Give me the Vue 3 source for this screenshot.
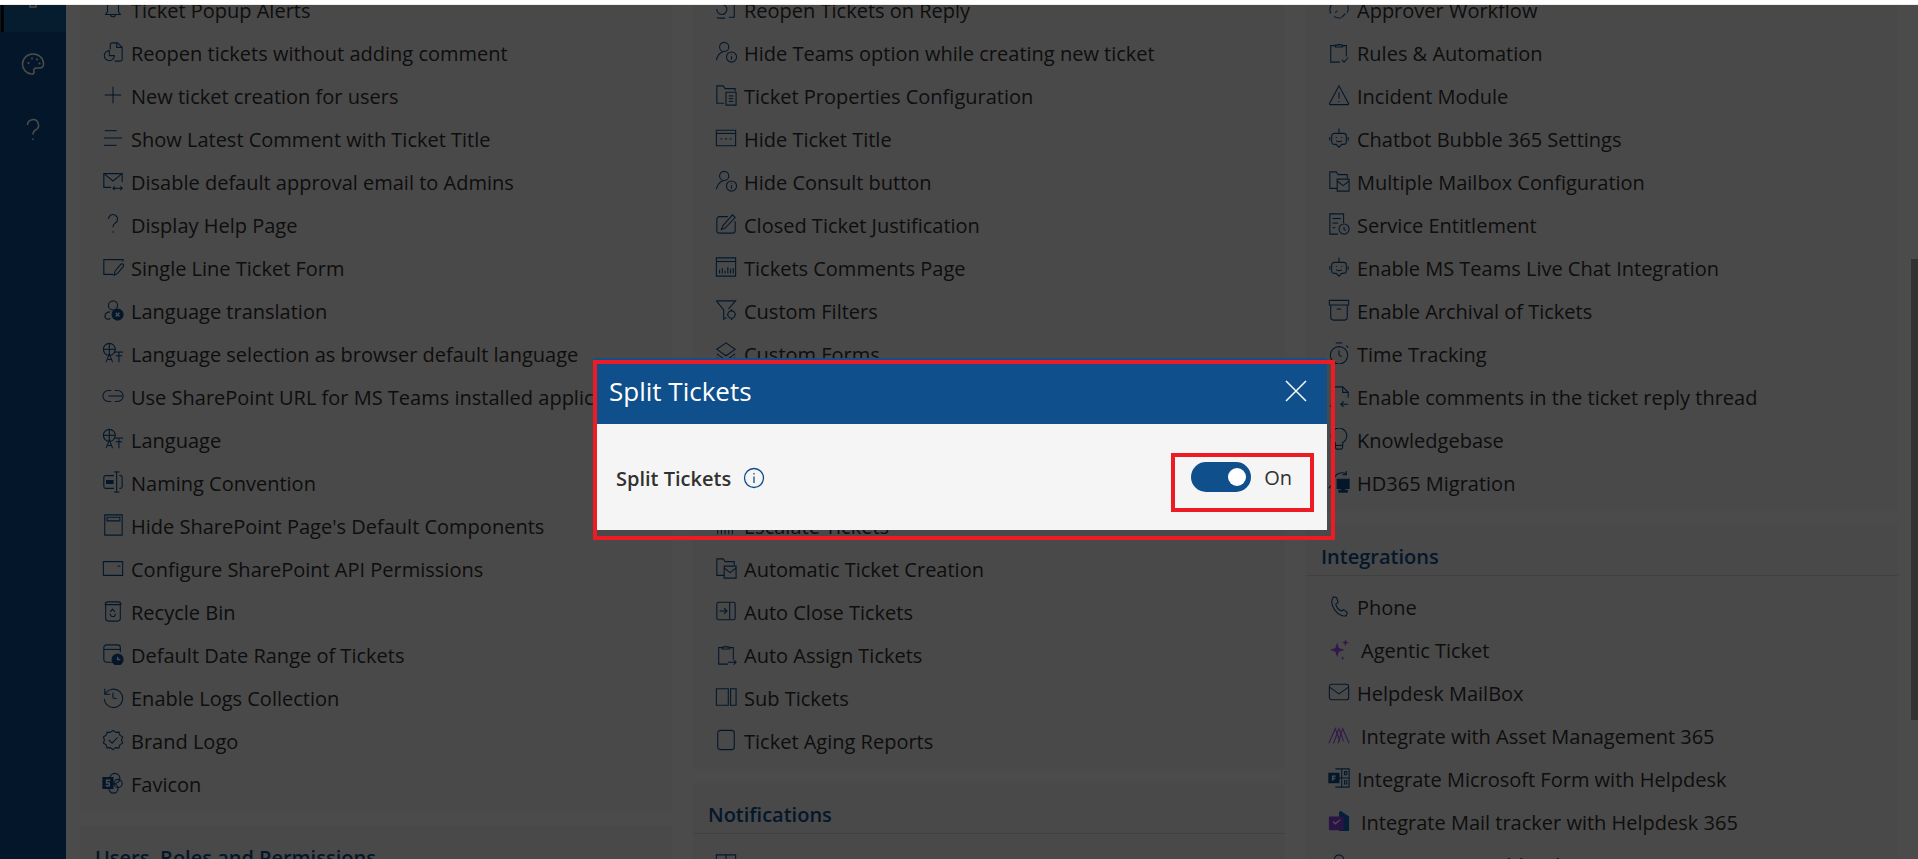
<script setup>
// stroke icons, 24x24 box. entries with f are filled, w is a white mark on a filled badge
const icons = {
  bell: ['M12 2a6 6 0 0 0-6 6v7l-2 3h16l-2-3V8a6 6 0 0 0-6-6z', 'M9.5 18a2.5 2.5 0 0 0 5 0'],
  reopen: ['M9 9V4a2 2 0 0 1 2-2h6l5 5v13a2 2 0 0 1-2 2h-6', 'M16 2v5h6', 'M8 10.500a5.500 5.500 0 1 0 5.500 5.500H8z'],
  plus: ['M12 3v18', 'M3 12h18'],
  lines: ['M3 4h13', 'M2 12h20', 'M2 20h14'],
  mailSwap: ['M10 19H2V4h20v9', 'M2 4l10 8 10-8', 'M12 20h10', 'M14 18l-2 2 2 2', 'M20 18l2 2-2 2'],
  question: ['M7 6.500a5 5 0 1 1 7.500 4.500c-1.700 1-2.500 2.200-2.500 4.500', 'M12 20v1.500'],
  formEdit: ['M12 20H2V4h21v2', 'M13 21l1.500-5L21 8.500a2 2 0 0 1 2.500 2.500L17 19z'],
  userX: ['M12 2a5 5 0 1 0 0 10a5 5 0 0 0 0-10z', 'M9 14a6 6 0 0 0-6 5a3.500 3.500 0 0 0 6 2', { f: 1, d: 'M17 11a6 6 0 1 0 0 12a6 6 0 0 0 0-12z' }, { w: 1, d: 'M15 15l4 4M19 15l-4 4' }],
  lang: ['M8 1.500a6.500 6.500 0 1 0 0 13a6.500 6.500 0 0 0 0-13z', 'M1.500 8h13', 'M8 1.500v13', 'M4.500 22l3.500-9 3.500 9', 'M6 19h4', 'M14 11h9', 'M18.500 11v11', 'M15 15h7'],
  link: ['M10 6H7a6 6 0 0 0 0 12h3', 'M14 6h3a6 6 0 0 1 0 12h-3', 'M7 12h15'],
  naming: ['M13 5H4a2 2 0 0 0-2 2v10a2 2 0 0 0 2 2h9', 'M19 5h1a2 2 0 0 1 2 2v10a2 2 0 0 1-2 2h-1', 'M16 1v22', 'M13 1h6', 'M13 23h6', { f: 1, d: 'M5 10.500h7v3H5z' }],
  page: ['M3 1h19v22H3z', 'M5.500 3.500h14v4h-14z'],
  wallet: ['M1.500 5h21v15h-21z', 'M17 10h3'],
  recycle: ['M4 5v15a3 3 0 0 0 3 3h10a3 3 0 0 0 3-3V5', 'M3.500 5a3 3 0 0 1 3-3h11a3 3 0 0 1 3 3z', 'M9 13l2.500-3 2.500 3', 'M8.500 15l2 3h3l1.500-3'],
  calClock: ['M12 21H5a3 3 0 0 1-3-3V5a3 3 0 0 1 3-3h12a3 3 0 0 1 3 3v5', 'M2 7h18', { f: 1, d: 'M17 12a6 6 0 1 0 0 12a6 6 0 0 0 0-12z' }, { w: 1, d: 'M17 15v3h3' }],
  history: ['M3 3v6h6', 'M3.500 9a10 10 0 1 1-1 5', 'M12 7v6l4 1'],
  badge: ['M12 1.500l3 2.200 3.500-.3 1 3.300 3 2-1.200 3.300 1.200 3.300-3 2-1 3.300-3.500-.3-3 2.200-3-2.200-3.500.3-1-3.300-3-2 1.200-3.300L1.500 8.700l3-2 1-3.300 3.500.3z', 'M7.500 12l3.500 3.500 6-6.500'],
  sharepoint: ['M14 1.500a5.500 5.500 0 1 0 0 11a5.500 5.500 0 0 0 0-11z', 'M17.500 8a4.500 4.500 0 1 0 0 9a4.500 4.500 0 0 0 0-9z', 'M12.500 13a5 5 0 1 0 0 10a5 5 0 0 0 0-10z', { f: 1, d: 'M1 6h11v12H1z' }, { w: 1, d: 'M9 9H5v3h3v3H4' }],
  reply: ['M11 22H4a3 3 0 0 1-2-1', 'M2 12a5.500 5.500 0 1 0 5-5', 'M15 3h6v18h-6'],
  userInfo: ['M10 1.500a5 5 0 1 0 0 10a5 5 0 0 0 0-10z', 'M1.500 21c1-5 3.500-8 7-9', 'M18 12a5.500 5.500 0 1 0 0 11a5.500 5.500 0 0 0 0-11z', 'M18 16.500v4', 'M18 14.500v.5'],
  folderDoc: ['M10 21H2V2h7l2 3h11v3', 'M12 9h11v14H12z', 'M15 13h5', 'M15 16h5', 'M15 19h5'],
  dots: ['M1.500 3.500h21v17h-21z', 'M1.500 7h21', 'M6 13h2', 'M11 13h2', 'M16 13h2'],
  editBox: ['M14 4H5a3 3 0 0 0-3 3v12a3 3 0 0 0 3 3h14a3 3 0 0 0 3-3V9', 'M7 18l1.500-4L19 2l3 3L11 16.500z'],
  chartBox: ['M1.500 2h21v20h-21z', 'M1.500 6h21', 'M5 19v-4', 'M8 19v-6', 'M11 19v-3', 'M14 19v-7', 'M17 19v-5', 'M20 19v-6'],
  filterGear: ['M1.500 2h21l-8 9', 'M1.500 2l8 10v10l3-2', 'M18 13a4 4 0 1 0 0 8a4 4 0 0 0 0-8z', 'M18 11v2', 'M18 21v2', 'M13 17h1', 'M22 17h1'],
  layers: ['M12 1l10 7-10 7-10-7z', 'M2 13l10 7 10-7', 'M2 17l10 7 10-7'],
  bars: ['M3 2v20', 'M7 2v20', 'M11 2v20', 'M15 2v20', 'M19 2v20'],
  folderMail: ['M10 20H2V2h7l2 3h10v4', 'M10 10h13v13H10z', 'M10 12l6.500 5 6.500-5'],
  panelArrow: ['M4 2.500h16a2 2 0 0 1 2 2v15a2 2 0 0 1-2 2H4a2 2 0 0 1-2-2v-15a2 2 0 0 1 2-2z', 'M16 2.500v19', 'M5 12h8', 'M10 9l3 3-3 3'],
  clipArrow: ['M8 5H4v18h10', 'M16 5h4v13', 'M8 6.500V4.500h2.500a1.800 1.800 0 0 1 3 0H16v2z', 'M14 21h9', 'M20.500 18.500L23 21l-2.500 2.500'],
  panels: ['M1.500 3h13v18h-13z', 'M17 3h6v18h-6z'],
  roundBox: ['M6 1.500h12a3 3 0 0 1 3 3v15a3 3 0 0 1-3 3H6a3 3 0 0 1-3-3v-15a3 3 0 0 1 3-3z'],
  status: ['M1.500 2h21v21h-21z', 'M12 2v10'],
  dashed: ['M4 7a10 10 0 0 0-1 10', 'M6.500 20a10 10 0 0 0 8 1.500', 'M21 16a10 10 0 0 0 .5-8', 'M8 16l2-2', 'M15 21l4-4'],
  clipCheck: ['M8 5H3v18h10', 'M16 5h4v12', 'M8 6.500V4.500h2.500a1.800 1.800 0 0 1 3 0H16v2z', 'M15 20.500l2.500 2.500 4.500-5'],
  warning: ['M12 2L1.500 21.500a1 1 0 0 0 1 1h19a1 1 0 0 0 1-1z', 'M12 9v7', 'M12 18.500v1'],
  bot: ['M7 7h10a3 3 0 0 1 3 3v6a3 3 0 0 1-3 3h-2l-3 3-3-3H7a3 3 0 0 1-3-3v-6a3 3 0 0 1 3-3z', 'M12 1.500V7', 'M2 11v4', 'M22 11v4', 'M9 11v1', 'M15 11v1', 'M9 15c2 1.500 4 1.500 6 0'],
  listClock: ['M11 23H2V1h15v10', 'M5 6h9', 'M5 11h6', 'M5 16h3', 'M17.500 12a5.500 5.500 0 1 0 0 11a5.500 5.500 0 0 0 0-11z', 'M17.500 15v3l2 1'],
  archive: ['M1.500 1.500h21v5h-21z', 'M3 6.500V20a3 3 0 0 0 3 3h12a3 3 0 0 0 3-3V6.500', 'M9.500 11h5'],
  timer: ['M12 5a9.500 9.500 0 1 0 0 19a9.500 9.500 0 0 0 0-19z', 'M8.500 1h7', 'M12 9v5l3 2', 'M20 4l2 2'],
  docReply: ['M5 12V2h11l6 6v6', 'M16 2v6h6', 'M4 23H2', 'M14 21h8', 'M17 18l-3 3 3 3'],
  bulb: ['M8 16a8.500 8.500 0 1 1 8 0v5a2 2 0 0 1-2 2h-4a2 2 0 0 1-2-2z', 'M8 19h8'],
  migrate: ['M6 9a10 10 0 0 1 14-6', 'M20 0v4h-4', 'M3 16l-2 3', { f: 1, d: 'M10 9h13v10h-5v2h3v2h-9v-2h3v-2h-5z' }],
  phone: ['M6 2l3.500 1 1.500 5-2.500 2c.5 3 3 6 6 7.500l2.500-1.500 4 3-1 3.500c-3.500 1.500-9-1-12.500-6S3 6 6 2z'],
  mail: ['M4 3.500h16a2.500 2.500 0 0 1 2.500 2.500v12a2.500 2.500 0 0 1-2.500 2.500H4A2.500 2.500 0 0 1 1.500 18V6A2.500 2.500 0 0 1 4 3.500z', 'M2 7l10 7 10-7'],
  forms: ['M8 2h15v20H8', 'M15 2v20', 'M8 12h15', 'M18 5h2.500v3.500H18z', 'M18 15h2.500v3.500H18z', { f: 1, d: 'M1 7h11v10H1z' }, { w: 1, d: 'M8.500 10H5v5M5 12.500h3' }],
  webhook: ['M12 2a5 5 0 0 0-4 8l-4 7', 'M12 2a5 5 0 0 1 5 5'],
  sparkle: [
    { f: 2, d: 'M10 5l2 6 6 2-6 2-2 6-2-6-6-2 6-2z' },
    { f: 2, d: 'M19 1l1 3 3 1-3 1-1 3-1-3-3-1 3-1z' },
    { f: 2, d: 'M16 20l.7 1.300L18 22l-1.300.7L16 24l-.7-1.300L14 22l1.300-.7z' }
  ],
  asset: [{ p: 1, d: 'M1 21L8 5l5 14' }, { p: 1, d: 'M6 21L12 5l5 14' }, { p: 1, d: 'M11 21L16 5l7 16' }],
  tracker: [
    { c: '#1565c0', d: 'M14 1l9 6v15a1 1 0 0 1-1 1H12V2z' },
    { c: '#8e44e8', d: 'M2 7h15v15H2a1 1 0 0 1-1-1V8a1 1 0 0 1 1-1z' },
    { c: '#fff', d: 'M5 13l1-1 2 2 5-4 1 1-6 5z' }
  ]
}

const groups = [
  [
    {
      rows: [
        ['bell', 'Ticket Popup Alerts'],
        ['reopen', 'Reopen tickets without adding comment'],
        ['plus', 'New ticket creation for users'],
        ['lines', 'Show Latest Comment with Ticket Title'],
        ['mailSwap', 'Disable default approval email to Admins'],
        ['question', 'Display Help Page'],
        ['formEdit', 'Single Line Ticket Form'],
        ['userX', 'Language translation'],
        ['lang', 'Language selection as browser default language'],
        ['link', 'Use SharePoint URL for MS Teams installed application'],
        ['lang', 'Language'],
        ['naming', 'Naming Convention'],
        ['page', "Hide SharePoint Page's Default Components"],
        ['wallet', 'Configure SharePoint API Permissions'],
        ['recycle', 'Recycle Bin'],
        ['calClock', 'Default Date Range of Tickets'],
        ['history', 'Enable Logs Collection'],
        ['badge', 'Brand Logo'],
        ['sharepoint', 'Favicon']
      ]
    },
    { title: 'Users, Roles and Permissions', rows: [] }
  ],
  [
    {
      rows: [
        ['reply', 'Reopen Tickets on Reply'],
        ['userInfo', 'Hide Teams option while creating new ticket'],
        ['folderDoc', 'Ticket Properties Configuration'],
        ['dots', 'Hide Ticket Title'],
        ['userInfo', 'Hide Consult button'],
        ['editBox', 'Closed Ticket Justification'],
        ['chartBox', 'Tickets Comments Page'],
        ['filterGear', 'Custom Filters'],
        ['layers', 'Custom Forms'],
        ['roundBox', 'Split Tickets'],
        ['roundBox', 'Merge Tickets'],
        ['roundBox', 'Ticket Templates'],
        ['bars', 'Escalate Tickets'],
        ['folderMail', 'Automatic Ticket Creation'],
        ['panelArrow', 'Auto Close Tickets'],
        ['clipArrow', 'Auto Assign Tickets'],
        ['panels', 'Sub Tickets'],
        ['roundBox', 'Ticket Aging Reports']
      ]
    },
    { title: 'Notifications', rows: [['status', 'Status']] }
  ],
  [
    {
      rows: [
        ['dashed', 'Approver Workflow'],
        ['clipCheck', 'Rules & Automation'],
        ['warning', 'Incident Module'],
        ['bot', 'Chatbot Bubble 365 Settings'],
        ['folderMail', 'Multiple Mailbox Configuration'],
        ['listClock', 'Service Entitlement'],
        ['bot', 'Enable MS Teams Live Chat Integration'],
        ['archive', 'Enable Archival of Tickets'],
        ['timer', 'Time Tracking'],
        ['docReply', 'Enable comments in the ticket reply thread'],
        ['bulb', 'Knowledgebase'],
        ['migrate', 'HD365 Migration']
      ]
    },
    {
      title: 'Integrations',
      rows: [
        ['phone', 'Phone'],
        ['sparkle', 'Agentic Ticket', true],
        ['mail', 'Helpdesk MailBox'],
        ['asset', 'Integrate with Asset Management 365', true],
        ['forms', 'Integrate Microsoft Form with Helpdesk'],
        ['tracker', 'Integrate Mail tracker with Helpdesk 365', true],
        ['webhook', 'Azure Sprint Webhook']
      ]
    }
  ]
]

const shapes = (name) =>
  icons[name].map((s) => (typeof s === 'string' ? { d: s } : s))

const shapeClass = (s) => ({
  solid: s.f === 1,
  purple: s.f === 2,
  plum: s.p === 1,
  white: s.w === 1
})
</script>

<template>
  <div class="page">
    <div class="strip"></div>
    <div class="shell">
      <aside class="rail">
        <div class="rail-item active">
          <svg class="rail-icon" viewBox="0 0 24 24">
            <path d="M9 0v3l-3 2-3-1-2 3 2 2v3l-2 2 2 3 3-1 3 2v3h6v-3l3-2 3 1 2-3-2-2V9l2-2-2-3-3 1-3-2V0z" />
          </svg>
        </div>
        <div class="rail-item">
          <svg class="rail-icon" viewBox="0 0 24 24">
            <path d="M12 2C6 2 1.500 6.500 1.500 12c0 5 3.500 9.500 9 10 2 .2 3-1 2.500-2.500-.7-2 .3-3.500 2.500-3.500h3c2.500 0 4-1.500 4-4C22.500 6 18 2 12 2z" />
            <circle cx="7.500" cy="11" r="1" class="dot" />
            <circle cx="11" cy="6.500" r="1" class="dot" />
            <circle cx="16" cy="7.500" r="1" class="dot" />
            <circle cx="18.500" cy="11.500" r="1" class="dot" />
          </svg>
        </div>
        <div class="rail-item">
          <svg class="rail-icon" viewBox="0 0 24 24">
            <path d="M6.500 7a5.500 5.500 0 1 1 8 5c-1.700 1-2.500 2.200-2.500 4.500" />
            <path d="M12 20.500v1.500" />
          </svg>
        </div>
      </aside>

      <main class="main">
        <div class="columns">
          <div v-for="(col, i) in groups" :key="i" class="column">
            <section v-for="(group, j) in col" :key="j" class="card">
              <h4 v-if="group.title" class="card-head">{{ group.title }}</h4>
              <div class="rows" :class="{ 'rows-first': !group.title }">
                <div v-for="row in group.rows" :key="row[1]" class="row">
                  <svg class="icon" viewBox="0 0 24 24">
                    <path
                      v-for="(s, k) in shapes(row[0])"
                      :key="k"
                      :d="s.d"
                      :class="shapeClass(s)"
                      :style="s.c ? { fill: s.c, stroke: 'none' } : null"
                    />
                  </svg>
                  <span class="label" :class="{ shifted: row[2] }">{{ row[1] }}</span>
                </div>
              </div>
            </section>
          </div>
        </div>
        <div class="scrollbar"><div class="thumb"></div></div>
      </main>
    </div>

    <div class="overlay">
      <div class="modal">
        <div class="modal-head">
          <span>Split Tickets</span>
          <svg class="close" viewBox="0 0 22 22">
            <path d="M1 1l20 20M21 1L1 21" />
          </svg>
        </div>
        <div class="modal-body">
          <div class="field">
            <span class="field-name">Split Tickets</span>
            <svg class="info" viewBox="0 0 22 22">
              <circle cx="11" cy="11" r="9.500" />
              <path d="M11 9.500v6.500M11 6v1.500" />
            </svg>
          </div>
          <div class="switch-wrap">
            <div class="switch"><span class="knob"></span></div>
            <span class="switch-text">On</span>
            <span class="mark-inner"></span>
          </div>
        </div>
        <span class="mark-outer"></span>
      </div>
    </div>
  </div>
</template>

<style scoped>
.page {
  position: relative;
  height: 859px;
  overflow: hidden;
  display: flex;
  flex-direction: column;
  background: #fbfbfb;
  font-family: "Open Sans", "Noto Sans", sans-serif;
  color: #323130;
}
.strip {
  position: relative;
  z-index: 3;
  flex: none;
  height: 4px;
  background: #fff;
  border-bottom: 1px solid #f6ebe0;
}
.shell {
  flex: 1;
  min-height: 0;
  display: flex;
}
.rail {
  flex: none;
  width: 66px;
  background: #0f4f8c;
}
.rail-item {
  display: flex;
  align-items: center;
  justify-content: center;
  height: 60px;
  margin-bottom: 6px;
}
.rail-item.active {
  height: 27px;
  margin-bottom: 0;
  align-items: flex-end;
  background: #14609f;
  border-left: 3px solid #0a0a0a;
  margin-left: 1px;
  overflow: hidden;
  padding-bottom: 22px;
  box-sizing: border-box;
  padding-right: 4px;
}
.rail-item:nth-child(2) {
  margin-top: 2px;
}
.rail-icon {
  width: 24px;
  height: 24px;
  flex: none;
  fill: none;
  stroke: #fff;
  stroke-width: 1.500;
}
.rail-icon .dot {
  fill: #fff;
  stroke: none;
}
.main {
  flex: 1;
  min-width: 0;
  display: flex;
}
.columns {
  flex: 1;
  min-width: 0;
  display: grid;
  grid-template-columns: repeat(3, 1fr);
  gap: 21px;
  padding: 0 13px 0 14px;
  margin-top: -16px;
  align-items: start;
}
.column {
  display: flex;
  flex-direction: column;
  gap: 14px;
  min-width: 0;
}
.card {
  background: #f4f4f4;
  padding-bottom: 6px;
  min-width: 0;
}
.card-head {
  margin: 0;
  padding: 19px 15px 6px;
  height: 25px;
  line-height: 25px;
  font-size: 20px;
  font-weight: 600;
  color: #0f4f8c;
  border-bottom: 1px solid #d6d6d6;
}
.rows {
  padding-top: 10px;
}
.rows-first {
  padding-top: 0;
}
.row {
  display: flex;
  align-items: center;
  height: 43px;
  padding-left: 22px;
}
.icon {
  flex: none;
  width: 22px;
  height: 22px;
  margin-top: -3px;
  fill: none;
  stroke: #0f4f8c;
  stroke-width: 1.200;
}
.icon .solid {
  fill: #0f4f8c;
}
.icon .purple {
  fill: #a855f7;
  stroke: none;
}
.icon .plum {
  stroke: #a855f7;
}
.icon .white {
  stroke: #fff;
  stroke-width: 1.500;
}
.label {
  margin-left: 7px;
  font-size: 20px;
  line-height: 24px;
  white-space: nowrap;
}
.label.shifted {
  margin-left: 11px;
}
.scrollbar {
  flex: none;
  width: 7px;
}
.thumb {
  margin-top: 254px;
  height: 461px;
  background: #a3a3a3;
}
.overlay {
  position: absolute;
  inset: 0;
  z-index: 2;
  display: flex;
  justify-content: center;
  align-items: flex-start;
  padding: 358px 0 0 2px;
  background: rgba(0, 0, 0, 0.7);
}
.modal {
  position: relative;
  width: 734px;
  background: #f5f5f5;
}
.modal-head {
  display: flex;
  align-items: center;
  justify-content: space-between;
  height: 66px;
  padding: 0 20px 0 16px;
  background: #0f4f8c;
  color: #fff;
  font-size: 26px;
}
.close {
  width: 22px;
  height: 22px;
  fill: none;
  stroke: #fff;
  stroke-width: 1.500;
}
.modal-body {
  display: flex;
  align-items: center;
  justify-content: space-between;
  height: 106px;
  padding: 0 35px 0 23px;
}
.field {
  display: flex;
  align-items: center;
  gap: 12px;
  padding-top: 2px;
}
.field-name {
  font-size: 20px;
  font-weight: 600;
}
.info {
  width: 22px;
  height: 22px;
  fill: none;
  stroke: #0f4f8c;
  stroke-width: 1.300;
}
.switch-wrap {
  position: relative;
  display: flex;
  align-items: center;
  gap: 13px;
}
.switch {
  display: flex;
  align-items: center;
  justify-content: flex-end;
  width: 60px;
  height: 30px;
  padding-right: 5px;
  box-sizing: border-box;
  border-radius: 15px;
  background: #0f4f8c;
}
.knob {
  width: 18px;
  height: 18px;
  border-radius: 50%;
  background: #fff;
}
.switch-text {
  font-size: 20px;
}
.mark-inner {
  position: absolute;
  left: -20px;
  right: -22px;
  top: -9px;
  bottom: -20px;
  border: 4px solid #ed1c24;
}
.mark-outer {
  position: absolute;
  left: 0;
  right: -8px;
  top: 2px;
  bottom: -10px;
  border: 4.500px solid #ed1c24;
  pointer-events: none;
}
</style>

<style>
html, body {
  margin: 0;
  overflow: hidden;
}
</style>
